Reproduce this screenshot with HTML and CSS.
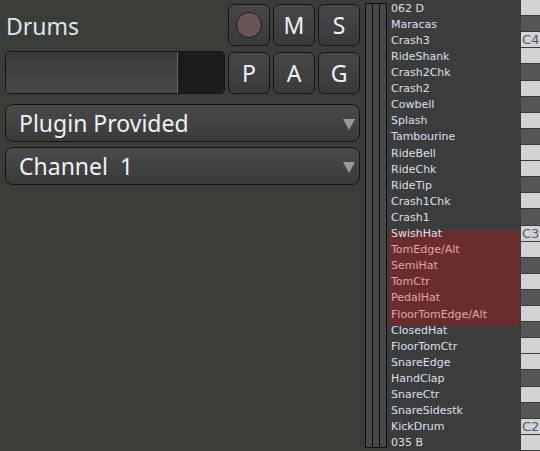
FILE: index.html
```html
<!DOCTYPE html>
<html>
<head>
<meta charset="utf-8">
<link rel="stylesheet" href="styles.css">
</head>
<body>
<div class="app">
  <div class="panel">
    <div class="top">
      <div class="namecol">
        <div class="name">Drums</div>
        <div class="fader"><div class="fader-fill"></div><div class="fader-empty"></div></div>
      </div>
      <div class="btns">
        <div class="btn"><span class="rec"></span></div>
        <div class="btn">M</div>
        <div class="btn">S</div>
        <div class="btn">P</div>
        <div class="btn">A</div>
        <div class="btn">G</div>
      </div>
    </div>
    <div class="combo combo-first"><span>Plugin Provided</span><span class="arrow"></span></div>
    <div class="combo"><span>Channel&nbsp; 1</span><span class="arrow"></span></div>
  </div>
  <div class="meters">
    <div class="meter"></div><div class="meter"></div><div class="meter"></div>
  </div>
  <div class="list">
    <div class="sel"></div>
    <div class="row">062 D</div>
    <div class="row">Maracas</div>
    <div class="row">Crash3</div>
    <div class="row">RideShank</div>
    <div class="row">Crash2Chk</div>
    <div class="row">Crash2</div>
    <div class="row">Cowbell</div>
    <div class="row">Splash</div>
    <div class="row">Tambourine</div>
    <div class="row">RideBell</div>
    <div class="row">RideChk</div>
    <div class="row">RideTip</div>
    <div class="row">Crash1Chk</div>
    <div class="row">Crash1</div>
    <div class="row">SwishHat</div>
    <div class="row hl">TomEdge/Alt</div>
    <div class="row hl">SemiHat</div>
    <div class="row hl">TomCtr</div>
    <div class="row hl">PedalHat</div>
    <div class="row hl">FloorTomEdge/Alt</div>
    <div class="row">ClosedHat</div>
    <div class="row">FloorTomCtr</div>
    <div class="row">SnareEdge</div>
    <div class="row">HandClap</div>
    <div class="row">SnareCtr</div>
    <div class="row">SnareSidestk</div>
    <div class="row">KickDrum</div>
    <div class="row">035 B</div>
  </div>
  <div class="keys">
    <div class="key w"></div>
    <div class="key b"></div>
    <div class="key w">C4</div>
    <div class="key w"></div>
    <div class="key b"></div>
    <div class="key w"></div>
    <div class="key b"></div>
    <div class="key w"></div>
    <div class="key b"></div>
    <div class="key w"></div>
    <div class="key w"></div>
    <div class="key b"></div>
    <div class="key w"></div>
    <div class="key b"></div>
    <div class="key w">C3</div>
    <div class="key w"></div>
    <div class="key b"></div>
    <div class="key w"></div>
    <div class="key b"></div>
    <div class="key w"></div>
    <div class="key b"></div>
    <div class="key w"></div>
    <div class="key w"></div>
    <div class="key b"></div>
    <div class="key w"></div>
    <div class="key b"></div>
    <div class="key w">C2</div>
    <div class="key w"></div>
  </div>
</div>
</body>
</html>
```

FILE: styles.css
```css
html, body {
  margin: 0;
  padding: 0;
  background: #3b3e38;
}
.app {
  display: flex;
  width: 540px;
  height: 451px;
  overflow: hidden;
}
.panel {
  width: 356px;
  padding: 4px 0 0 5px;
  display: flex;
  flex-direction: column;
  flex-shrink: 0;
}
.top {
  display: flex;
  gap: 3px;
}
.namecol {
  width: 220px;
  display: flex;
  flex-direction: column;
}
.name {
  height: 47px;
  font-family: "Noto Sans", sans-serif;
  font-size: 23px;
  color: #dde5f0;
  line-height: 44px;
  padding-left: 1px;
}
.fader {
  height: 41px;
  border: 1px solid #151515;
  border-radius: 4px;
  display: flex;
  overflow: hidden;
}
.fader-fill {
  width: 171px;
  background: linear-gradient(#3a3a3a, #474747);
  border-right: 1px solid #6a6a6a;
}
.fader-empty {
  flex: 1;
  background: #1c1c1c;
}
.btns {
  display: grid;
  grid-template-columns: repeat(3, 42px);
  grid-auto-rows: 42px;
  column-gap: 3px;
  row-gap: 6px;
}
.btn {
  box-sizing: border-box;
  border: 1px solid #151515;
  border-radius: 6px;
  background: linear-gradient(#474747, #3a3a3a);
  display: flex;
  align-items: center;
  justify-content: center;
  font-family: "Noto Sans", sans-serif;
  font-size: 23px;
  color: #eef2f8;
}
.rec {
  width: 24px;
  height: 24px;
  border-radius: 50%;
  background: #6b5456;
  border: 1px solid #1e1e1e;
}
.combo {
  margin-top: 5px;
  box-sizing: border-box;
  width: 355px;
  height: 38px;
  border: 1px solid #151515;
  border-radius: 8px;
  background: linear-gradient(#4a4a4a, #3a3a3a);
  display: flex;
  align-items: center;
  justify-content: space-between;
  padding: 0 4px 0 13px;
  font-family: "Noto Sans", sans-serif;
  font-size: 23px;
  color: #eef2f8;
}
.combo-first { margin-top: 10px; }
.arrow {
  width: 0;
  height: 0;
  border-left: 6px solid transparent;
  border-right: 6px solid transparent;
  border-top: 11px solid #9a9a9a;
  margin-top: 2px;
}
.meters {
  margin-left: 4px;
  display: flex;
  padding: 3px 0;
  height: 445px;
}
.meter {
  width: 6px;
  height: 443px;
  border: 1px solid #0e0e0e;
  background: #484848;
  margin-right: -1px;
}
.list {
  margin-left: 3px;
  position: relative;
  width: 132px;
  height: 451px;
  background: #3c3c3c;
  display: grid;
  grid-template-rows: repeat(28, 1fr);
  font-family: "DejaVu Sans", sans-serif;
  font-size: 11px;
  color: #d8e0ee;
}
.row {
  position: relative;
  padding-left: 2px;
  display: flex;
  align-items: center;
  white-space: nowrap;
}
.row.hl { color: #e6a3a6; }
.sel {
  position: absolute;
  left: 0;
  top: 231px;
  width: 130px;
  height: 95px;
  background: #6a2d2f;
}
.keys {
  width: 19px;
  height: 451px;
  display: grid;
  grid-template-rows: repeat(28, 1fr);
  background: #3a3a3a;
}
.key {
  margin-bottom: 1px;
  font-family: "DejaVu Sans", sans-serif;
  font-size: 13px;
  color: #4e5c6c;
  line-height: 16px;
  padding-left: 1px;
  overflow: hidden;
  white-space: nowrap;
}
.key.w { background: #d3d3d3; }
.key.b { background: #565656; }
```
